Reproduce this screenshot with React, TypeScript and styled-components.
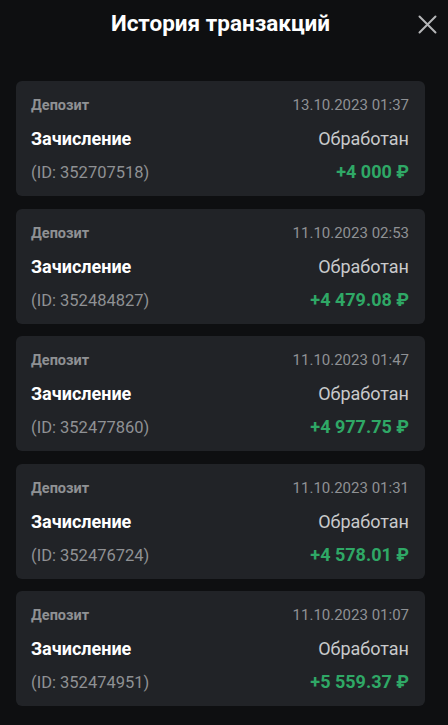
import React from 'react';
import styled, { createGlobalStyle } from 'styled-components';

interface Transaction {
  id: string;
  date: string;
  amount: string;
}

const transactions: Transaction[] = [
  { id: '352707518', date: '13.10.2023 01:37', amount: '+4 000 ₽' },
  { id: '352484827', date: '11.10.2023 02:53', amount: '+4 479.08 ₽' },
  { id: '352477860', date: '11.10.2023 01:47', amount: '+4 977.75 ₽' },
  { id: '352476724', date: '11.10.2023 01:31', amount: '+4 578.01 ₽' },
  { id: '352474951', date: '11.10.2023 01:07', amount: '+5 559.37 ₽' },
];

const GlobalStyle = createGlobalStyle`
  html, body {
    margin: 0;
    padding: 0;
    background: #0e0f11;
  }
  body {
    font-family: Roboto, "Liberation Sans", sans-serif;
    -webkit-font-smoothing: antialiased;
  }
`;

const Page = styled.div`
  width: 448px;
  min-height: 725px;
  background: #0e0f11;
  box-sizing: border-box;
  padding: 0 23px 19px 16px;
`;

const Header = styled.div`
  position: relative;
  height: 81px;
  display: flex;
  justify-content: center;
  padding-top: 7px;
  box-sizing: border-box;
`;

const Title = styled.h1`
  margin: 0;
  font-size: 22.5px;
  line-height: 32px;
  font-weight: 700;
  color: #ffffff;
`;

const CloseButton = styled.button`
  position: absolute;
  right: -13px;
  top: 13px;
  width: 22px;
  height: 22px;
  padding: 0;
  border: none;
  background: transparent;
  display: flex;
  align-items: center;
  justify-content: center;
  cursor: pointer;
`;

const List = styled.div`
  display: flex;
  flex-direction: column;
  gap: 12.5px;
`;

const Card = styled.div`
  background: #212327;
  border-radius: 6px;
  padding: 11px 16px 11px 15px;
  display: flex;
  flex-direction: column;
  gap: 6px;
  height: 115px;
  box-sizing: border-box;
`;

const Row = styled.div`
  display: flex;
  justify-content: space-between;
  align-items: baseline;
`;

const Label = styled.span<{ $tone: 'muted' | 'strong' | 'soft' | 'green'; $size: number; $weight?: number }>`
  font-size: ${(p) => p.$size}px;
  line-height: 27px;
  font-weight: ${(p) => p.$weight ?? 400};
  color: ${(p) =>
    p.$tone === 'strong' ? '#ffffff' :
    p.$tone === 'soft' ? '#c9cacc' :
    p.$tone === 'green' ? '#2fa866' : '#8f9194'};
`;

const App: React.FC = () => {
  return (
    <>
      <GlobalStyle />
      <Page>
        <Header>
          <Title>История транзакций</Title>
          <CloseButton aria-label="Закрыть">
            <svg width="19" height="19" viewBox="0 0 19 19" fill="none">
              <path d="M1.5 1.5 L17.5 17.5 M17.5 1.5 L1.5 17.5" stroke="#b5b6b8" strokeWidth="2" strokeLinecap="round" />
            </svg>
          </CloseButton>
        </Header>
        <List>
          {transactions.map((t) => (
            <Card key={t.id}>
              <Row>
                <Label $tone="muted" $size={14.5} $weight={700}>Депозит</Label>
                <Label $tone="muted" $size={15}>{t.date}</Label>
              </Row>
              <Row>
                <Label $tone="strong" $size={18} $weight={700}>Зачисление</Label>
                <Label $tone="soft" $size={18}>Обработан</Label>
              </Row>
              <Row>
                <Label $tone="muted" $size={16.5}>(ID: {t.id})</Label>
                <Label $tone="green" $size={18} $weight={700}>{t.amount}</Label>
              </Row>
            </Card>
          ))}
        </List>
      </Page>
    </>
  );
};

export default App;
